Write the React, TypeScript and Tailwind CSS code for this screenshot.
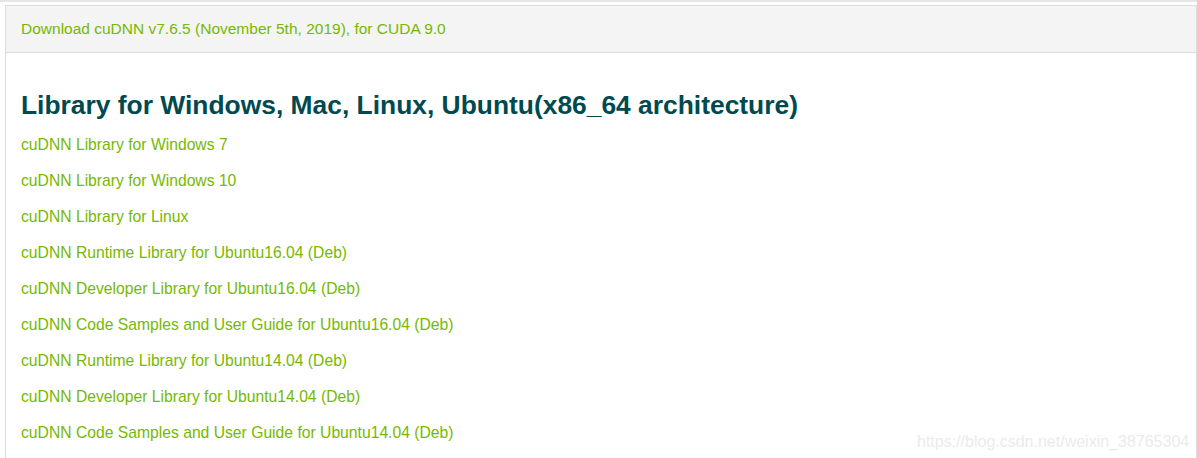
import React from 'react';

const links = [
  'cuDNN Library for Windows 7',
  'cuDNN Library for Windows 10',
  'cuDNN Library for Linux',
  'cuDNN Runtime Library for Ubuntu16.04 (Deb)',
  'cuDNN Developer Library for Ubuntu16.04 (Deb)',
  'cuDNN Code Samples and User Guide for Ubuntu16.04 (Deb)',
  'cuDNN Runtime Library for Ubuntu14.04 (Deb)',
  'cuDNN Developer Library for Ubuntu14.04 (Deb)',
  'cuDNN Code Samples and User Guide for Ubuntu14.04 (Deb)',
];

export default function App() {
  return (
    <div className="relative h-[458px] w-full overflow-hidden bg-white font-['Liberation_Sans',Arial,sans-serif]">
      <div className="h-[2px] bg-[#e6e6e6]" />
      <div className="ml-[5px] mt-[3px] h-[460px] border-l border-r border-t border-[#dcdcdc]">
        <div className="flex h-[47px] items-center border-b border-[#dcdcdc] bg-[#f4f4f4] pl-[15px]">
          <a className="text-[15.5px] text-[#76b900]">
            Download cuDNN v7.6.5 (November 5th, 2019), for CUDA 9.0
          </a>
        </div>
        <div className="flex flex-col pl-[15px] pt-[36px]">
          <h2 className="text-[26.4px] font-bold leading-[32px] text-[#004a4f]">
            Library for Windows, Mac, Linux, Ubuntu(x86_64 architecture)
          </h2>
          <ul className="mt-[6px] flex flex-col">
            {links.map((l) => (
              <li key={l} className="text-[15.7px] leading-[36px] text-[#76b900]">
                <a>{l}</a>
              </li>
            ))}
          </ul>
        </div>
      </div>
      <div className="absolute left-[917px] top-[430px] text-[16px] text-[#ebebeb]">
        https://blog.csdn.net/weixin_38765304
      </div>
    </div>
  );
}
